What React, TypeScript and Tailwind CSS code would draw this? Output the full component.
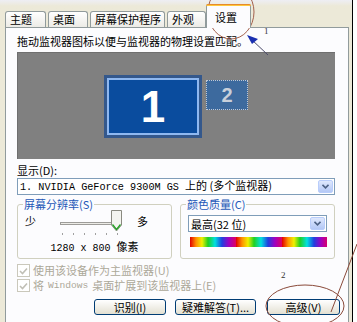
export default function App() {
  const tabBase =
    "h-[16px] border border-b-0 border-[#919b9c] rounded-t-[3px] bg-gradient-to-b from-white to-[#ecebe6] pl-[4px] text-[11px] leading-[15px] text-black";
  return (
    <div className="relative w-[357px] h-[322px] overflow-hidden flex bg-white font-['Noto_Sans_CJK_SC','Liberation_Sans',sans-serif]">
      <div className="w-[352px] h-full flex flex-col bg-gradient-to-b from-[#eeeef4] via-[#ece9d8] to-[#ece9d8] [background-size:100%_12px] bg-no-repeat bg-[#ece9d8]">
        {/* tabs */}
        <div className="h-[27px] flex items-end pl-[5px] shrink-0">
          <div className={tabBase + " w-[41px]"}>主题</div>
          <div className={tabBase + " w-[40px] ml-[2px]"}>桌面</div>
          <div className={tabBase + " w-[75px] ml-[2px]"}>屏幕保护程序</div>
          <div className={tabBase + " w-[39px] ml-[2px]"}>外观</div>
          <div className="relative z-10 w-[45px] h-[24px] mb-[-1px] border-x border-[#919b9c] rounded-t-[3px] bg-[#fcfcfe] text-[11px] leading-[20px] pl-[8px] pt-[3px] text-black">
            <div className="absolute left-[-1px] right-[-1px] top-0 h-[2px] rounded-t-[3px] bg-[#ffc83c] border-t border-[#e68b2c]"></div>
            设置
          </div>
        </div>
        {/* panel */}
        <div className="ml-[5px] w-[344px] flex-1 border border-b-0 border-[#919b9c] bg-[#fcfcfe] pl-[11px] flex flex-col">
          <div className="mt-[6px] h-[14px] text-[11px] leading-[14px] text-black">
            拖动监视器图标以便与监视器的物理设置匹配。
          </div>
          <div className="relative mt-[4px] w-[318px] h-[107px] bg-[#808080] border-t border-l border-[#6f6f6f]">
            <div className="absolute left-[86px] top-[22px] w-[98px] h-[63px] bg-[#34588c] p-[3px]">
              <div className="w-full h-full border-2 border-[#8fb8f0] bg-[#0a4c9e] flex items-center justify-center">
                <span className="text-white text-[44px] font-bold leading-none font-['Liberation_Sans',sans-serif]">1</span>
              </div>
            </div>
            <div className="absolute left-[188px] top-[27px] w-[42px] h-[30px] border border-dotted border-[#c0c8d4] bg-[#3d6a9e] flex items-center justify-center">
              <span className="text-[#c9d0da] text-[20px] font-bold leading-none font-['Liberation_Sans',sans-serif]">2</span>
            </div>
          </div>
          <div className="mt-[4px] h-[14px] text-[11px] leading-[14px] text-black">显示(D):</div>
          <div className="mt-[1px] w-[318px] h-[17px] border border-[#7f9db9] bg-white flex items-center pl-[2px]">
            <span className="text-[11px] leading-[14px] text-black whitespace-pre">
              <span className="text-[10.2px] font-['Liberation_Mono',monospace]">1. NVIDIA GeForce 9300M GS </span>上的 (多个监视器)
            </span>
            <div className="ml-auto mr-[1px] w-[15px] h-[13px] rounded-[2px] border border-[#b9cdfb] bg-gradient-to-b from-[#dfe8fd] to-[#b4c8f6] flex items-center justify-center">
              <svg width="7" height="5" viewBox="0 0 7 5"><path d="M0.5 0.8 L3.5 3.8 L6.5 0.8" fill="none" stroke="#4d6185" strokeWidth="1.6" /></svg>
            </div>
          </div>
          <div className="mt-[3px] flex gap-[8px]">
            <fieldset className="w-[155px] h-[61px] border border-[#d0d0bf] rounded-[3px] px-0">
              <legend className="ml-[5px] px-[1px] text-[11px] leading-[12px] text-[#2458b8]">屏幕分辨率(S)</legend>
              <div className="flex items-center h-[24px] mt-[-1px]">
                <span className="ml-[7px] text-[11px] leading-[12px] text-black">少</span>
                <div className="ml-[24px] w-[54px] h-[3px] mt-[4px] border border-[#9d9c99] bg-[#ecebe6]"></div>
                <svg className="ml-[-3px]" width="11" height="22" viewBox="0 0 11 22">
                  <path d="M0.5 0.5 H10.5 V15 L5.5 21 L0.5 15 Z" fill="#f4f4f0" stroke="#8a8a80" />
                  <path d="M1.5 14.5 L5.5 19.5 L9.5 14.5" fill="none" stroke="#21a121" strokeWidth="1.3" />
                </svg>
                <span className="ml-[15px] text-[11px] leading-[12px] text-black">多</span>
              </div>
              <div className="flex ml-[44px] gap-[10px] h-[2px]">
                <div className="w-[1px] h-[2px] bg-[#a0a0a0]"></div>
                <div className="w-[1px] h-[2px] bg-[#a0a0a0]"></div>
                <div className="w-[1px] h-[2px] bg-[#a0a0a0]"></div>
                <div className="w-[1px] h-[2px] bg-[#a0a0a0]"></div>
                <div className="w-[1px] h-[2px] bg-[#a0a0a0]"></div>
                <div className="w-[1px] h-[2px] bg-[#a0a0a0]"></div>
              </div>
              <div className="mt-[4px] h-[14px] text-center text-[11px] leading-[14px] text-black whitespace-pre">
                <span className="text-[10px] font-['Liberation_Mono',monospace]">1280 x 800 </span>像素
              </div>
            </fieldset>
            <fieldset className="w-[155px] h-[61px] border border-[#d0d0bf] rounded-[3px] px-0">
              <legend className="ml-[5px] px-[1px] text-[11px] leading-[12px] text-[#2458b8]">颜色质量(C)</legend>
              <div className="ml-[7px] mt-[5px] w-[139px] h-[17px] border border-[#7f9db9] bg-white flex items-center pl-[2px]">
                <span className="text-[11px] leading-[14px] text-black">最高(32 位)</span>
                <div className="ml-auto mr-[1px] w-[15px] h-[13px] rounded-[2px] border border-[#b9cdfb] bg-gradient-to-b from-[#dfe8fd] to-[#b4c8f6] flex items-center justify-center">
                  <svg width="7" height="5" viewBox="0 0 7 5"><path d="M0.5 0.8 L3.5 3.8 L6.5 0.8" fill="none" stroke="#4d6185" strokeWidth="1.6" /></svg>
                </div>
              </div>
              <div className="ml-[9px] mt-[5px] w-[137px] h-[10px] bg-[repeating-linear-gradient(to_right,#e00000_0px,#ff9000_6px,#f0f000_12px,#20d020_18px,#00e0e0_25px,#2040e0_32px,#a000c0_39px,#e00060_46px)]"></div>
            </fieldset>
          </div>
          <div className="mt-[5px] h-[13px] flex items-center">
            <div className="w-[13px] h-[13px] border border-[#cac8bb] bg-white flex items-center justify-center">
              <svg width="9" height="8" viewBox="0 0 9 8"><path d="M1 4 L3.5 6.5 L8 1.5" fill="none" stroke="#c0bfb5" strokeWidth="1.6" /></svg>
            </div>
            <span className="ml-[3px] text-[11px] leading-[13px] text-[#aca899]">使用该设备作为主监视器(U)</span>
          </div>
          <div className="mt-[2px] h-[13px] flex items-center text-[#aca899] text-[11px] leading-[13px]">
            <div className="w-[13px] h-[13px] border border-[#cac8bb] bg-white flex items-center justify-center">
              <svg width="9" height="8" viewBox="0 0 9 8"><path d="M1 4 L3.5 6.5 L8 1.5" fill="none" stroke="#c0bfb5" strokeWidth="1.6" /></svg>
            </div>
            <span className="ml-[3px]">将</span>
            <span className="ml-[4px] text-[9.6px] font-['Liberation_Mono',monospace]">Windows</span>
            <span className="ml-[4px]">桌面扩展到该监视器上(E)</span>
          </div>
          <div className="mt-[7px] flex h-[16px]">
            <div className="ml-[77px] w-[72px] h-[16px] border border-[#003c74] rounded-[3px] bg-gradient-to-b from-white to-[#e3e0d2] flex items-center justify-center text-[11px] leading-[14px] text-black">识别(I)</div>
            <div className="ml-[9px] w-[81px] h-[16px] border border-[#003c74] rounded-[3px] bg-gradient-to-b from-white to-[#e3e0d2] flex items-center justify-center text-[11px] leading-[14px] text-black whitespace-pre">疑难解答(T)...</div>
            <div className="ml-[11px] w-[73px] h-[16px] border border-[#003c74] rounded-[3px] bg-gradient-to-b from-white to-[#e3e0d2] flex items-center justify-center text-[11px] leading-[14px] text-black">高级(V)</div>
          </div>
        </div>
      </div>
      <div className="w-[1px] h-full bg-black"></div>
      <div className="flex-1 h-full bg-white"></div>

      {/* annotations */}
      <svg className="absolute inset-0 pointer-events-none" width="357" height="322" viewBox="0 0 357 322">
        <ellipse cx="231" cy="12" rx="23" ry="27" fill="none" stroke="#a3604c" strokeWidth="1" />
        <line x1="251" y1="39" x2="268" y2="55" stroke="#4a4a6a" strokeWidth="1" />
        <path d="M247 35 L258 39 L252 44 Z" fill="#1a2fb0" />
        <ellipse cx="305" cy="306" rx="39" ry="21" fill="none" stroke="#8a4a3a" strokeWidth="1" />
        <line x1="331" y1="312" x2="357" y2="244" stroke="#8a4a3a" strokeWidth="1" />
      </svg>
      <span className="absolute left-[264px] top-[26px] text-[9px] leading-[10px] text-[#333] font-['Liberation_Serif',serif]">1</span>
      <span className="absolute left-[281px] top-[270px] text-[9px] leading-[10px] text-[#333] font-['Liberation_Serif',serif]">2</span>
    </div>
  );
}
